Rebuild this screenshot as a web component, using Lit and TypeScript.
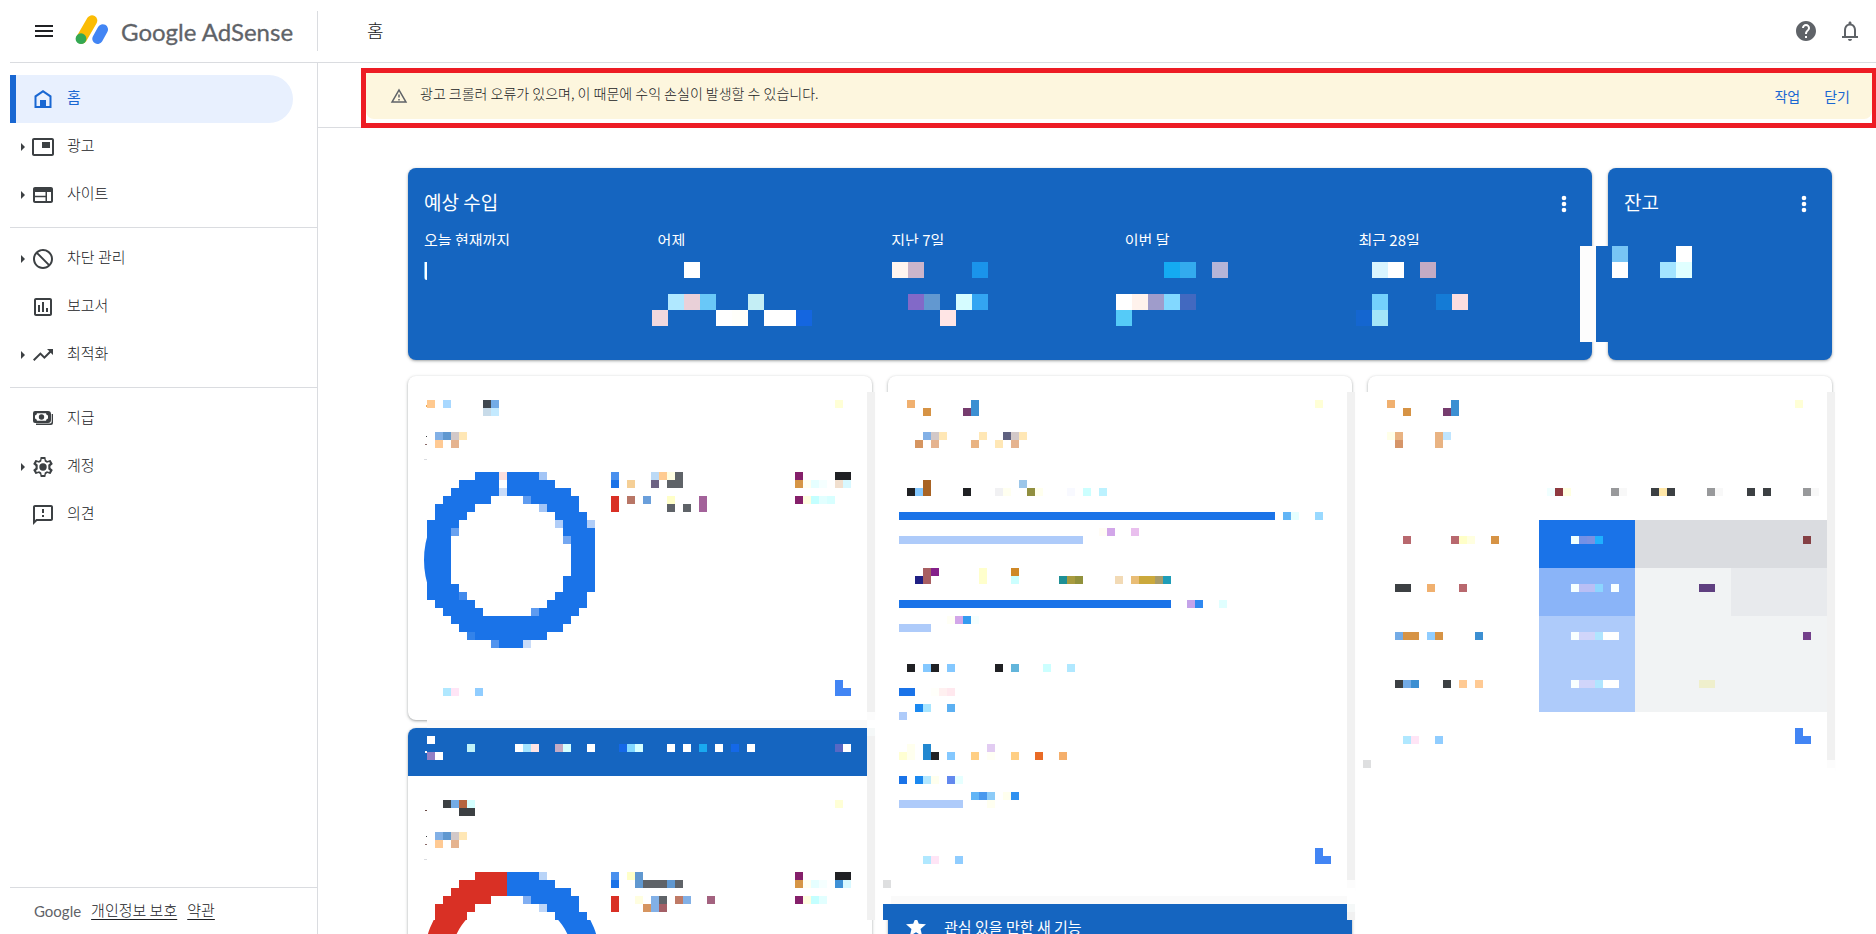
import { LitElement, html, svg, css } from "lit";
import { customElement, property } from "lit/decorators.js";

const PALETTE: Record<string, string> = {
  B: "#1a73e8",
  R: "#d93025",
  L: "#aecbfa",
  N: "#1565c0",
  W: "#ffffff",
  K: "#202124",
  G: "#3c4043",
  S: "#5f6368",
  E: "#f1f1f1",
};

// Each line reads "row[*rows] col[+cols]:color ...", measured in mosaic cells.
const SUMMARY = `
0*6 72:fdfdfd
0 74:78c5f5 78:W
1 16:W 29:fff5f0 30:cbb5cb 34:1a94eb 46:14abf2 47:33abee 49:b5b5d8 59:d8f5ff 60:W 62:c4abc4 74:W 77:a3e4ff 78:e0ffff
3 15:b0e8ff 16:e9d0d8 17:69c8f8 20:c4eef5 30:8269c8 31:6298d0 33:d5fcff 34:33a5f2 43:W 44:fff2ec 45:9f9ccb 46:82d8ff 47:4269c0 59:73d0fc 63:147bd6 64:fadde0
4 14:f0d8de 18:W 19:fffffa 21+2:W 23:1466e0 32:ffe5e5 43:55cbf8 58:1466d0 59:a3e5f8`;

const OVERVIEW = `
0*40 55:E
1 0:ffc98f 2:a8d8ff 7:3f474f 8:73abe6 51:ffffd6
1.625*0.25 -0.125+0.125:f0a850
2 7:c8dbe9 8:c4eaff
5 1:82b0e6 2:6098d0 3:d2c8c8 4:ffe7b5
5.5*0.125 -0.125+0.125:G
6 1:ffca94 3:e5b38f
6.5*0.125 -0.25+0.25:8a6a68
8.375*0.125 -0.375+0.375:dadce0
10 6+3:B 9:fbdfdd 10+4:B 14:a3c5f6 23:4990ee 28:bcdaf6 29:ffcb90 30:fffee2 31:S 46:85206a 51+2:K
11 4+5:B 10+6:B 23:B 25:f5cf96 28:6d6384 30+2:S 46:d69545 47:fffef2 48:e6ffff 49:f5ffff 51:f1dfce 52:d8f8ff
12 3+6:B 9:c9dcf9 10+8:B
13 2+6:B 12:5e9bf0 13+6:B 23:R 25:b87666 27:6a9fdb 30:ffffc8 34:a3629a 46:85206a 47:fffee0 48:c4ffff 49:e2ffff 50:d8ffff
14 1+5:B 14:a3c5f6 15+4:B 23:R 30:S 32:S 34:a3629a
15 1+4:B 16+4:B
16 0+4:B 16:b0cdf8 17+3:B 20:b0cdf8
17 0+3:B 3:69a1ef 17+4:B
18 0+3:B 17:74a7f1 18+3:B
19*4 0+3:B 18+3:B
23 0+3:B 17+4:B
24 0+4:B 17+4:B
25 0+4:B 4:428aec 16+4:B
26 1+5:B 15+5:B
27 2+5:B 13:5e9bf0 14+5:B
28 3+15:B
29 4+13:B
30 5:3383ea 6+9:B
31 8:5294ee 9+3:B 12:c9dcf9
36 51:4285f4
37 2:b0e8ff 3:ffe5f6 6:90cdff 51+2:4285f4
40 55:fcfcfc
41 0+55:fafafa
42*6 0+55:N
42 55:f5f8f8
43*23 55:E
43 0:W
44 5:c0f2f8 11:W 12:a3e4ff 13:ffe4e4 16:c4abc4 17:d5ffff 20:W 24:1468e8 25:82d8ff 26:d5ffff 30:W 32:W 34:19a9f0 36:W 38:1468e8 40:W 51:5768c4 52:W
44.875*0.25 -0.25+0.25:W
45 0:917fc4 1:W
51 2:G 3:73abe6 4:b5653f 5:d5ffff 51:ffffd6
52 4+2:G
52.25*0.125 -0.25+0.25:6b4a44
55 1:82b0e6 2:6098d0 3:d2c8c8 4:ffe7b5
55.5*0.125 -0.125+0.125:G
56 1:ffca94 3:e5b38f
56.5*0.125 -0.25+0.25:8a6a68
58.375*0.125 -0.375+0.375:dadce0
60 6+4:R 10+4:B 14:b9d4f8 23:4990ee 25:ffffc8 26:6098d0 46:85206a 51+2:K
61 4+6:R 10+6:B 23:B 26:6098d0 27+3:S 30:6098d0 31:S 46:d69545 47:fffef2 48:e6ffff 49:f5ffff 51:3f91d6 52:d8f8ff
62 3+7:R 10+8:B
63 2+6:R 12:80aef2 13+6:B 23:R 26:fffee0 28:82b0e6 29:S 31:bf7a66 32:82b0e6 35:a3627f 46:85206a 47:fffee0 48:c4ffff 49:e2ffff
64 1+5:R 14:bed6f8 15+4:B 23:R 27:d69560 28:82b0e6 29:a35f66
65 1+4:R 16+4:B`;

const PAGES = `
0*61 58:E
1 3:f0b06f 11:3c8fd2 54:ffffd6
2 5:d69345 10:763c6e 11:3c8fd2
5 5:82b0e6 6:d2c8c8 7:ffe7b5 12:ffe7b5 15:5f6180 16:d2c8c8 17:ffe7b5
6 4:d69560 6:e5b38f 11:e9b382 14:ffe7b5 16:e5b38f
11 5:a86324 17:9cc6e9
12 3:K 4:84c8ff 5:a86324 10:K 14:f1f1f3 15:fffff0 18:918f3f 19:ffffee 23:f8f9ff 25:ccffff 27:bcf2ff
15 2+47:B 50:62b5f6 51:e6ffff 54:99d9ff
17 27:fffcf5 28:d2a6e9 31:e9bfee
18 2+23:L
22 5:a85f62 6:85208a 12:ffffcc 16:cf8826
23 4:202084 5:a85f62 12:ffffcc 16:ccffff 22:1f9096 23:a89b3f 24:91913c 29:f2dab5 31:e9bd76 32+2:cba93c 34:a89b69 35:1f9db8
26 2+34:B 38:c4a3e9 39:2f88f0 42:e0ffff
28 8:fffff5 9:d2a6e9 10:339bf0 11:f5ffff
29 2+4:L
34 3:K 5:84c8ff 6:K 8:84c8ff 14:K 16:62b5db 20:ccffff 23:b0e8ff
37 2+2:B 6:fffffa 7:fff0f0 8:ffe8ee
39 4:1a88f0 5:a8e5ff 8:5cb0f2
40 2:L
44 3:ffffee 5:2288d0 13:e2ccf2
45 2:ffffd2 3:ffffee 5:2288d0 6:K 8:84c8ff 11:ffcf84 13:fffff5 16:ffcf84 19:e96b26 22:f5af6b
48 2:B 4:1a88f0 5:b5e8ff 6:ffffee 8:6288ee 9:e6ffff
50 11:62b5f6 12:4998ee 13:8ccbf8 15:ffffee 16:2f91f0
51 2+8:L 13:fffff0
57 54:4285f4
58 5:b0e8ff 6:ffe5f6 9:90cdff 54+2:4285f4
61 0:dedfe0 58:fcfcfc
63 1+57:fafafa
64*2 0+58:N
64 58:f5f8f8
65 58:E`;

const SIZES = `
0*46 58:E
1 3:f0b06f 11:3c8fd2 54:ffffd6
2 5:d69345 10:763c6e 11:3c8fd2
5 3:ffffe8 4:e9b382 9:e9b382 10:bfe5ff
6 4:d69569 9:e9b382
12 23:f0ffff 24:8f3a40 25:ffffe0 31:98999b 32:f8f8f8 36:G 37:ffe7a8 38:G 43:98999b 44:f8f8f8 48:G 50:G 55:98999b 56:f8f8f8
16*6 22+12:B 34+24:dadce0
18 5:b8686e 11:b8686e 12:ffffc8 13:ffffe0 16:d69345 26:f0ffff 27:7391e6 28:7a91e2 29:1fb0ff 55:854045
22*6 22+12:8ab4f8 34+12:f1f3f4 46+12:e8eaed
24 4+2:G 8:f0b06f 12:b8686e 26:f5ffff 27+2:b9bff5 29:8cd5ff 31:f8ffff 42+2:5f3f80
28*12 22+12:L 34+24:f1f3f4
30 4:73abe6 5+2:d69345 8:90cdff 9:d69345 14:3c8fd2 26:f8ffff 27+2:d0d5fa 29:b0e5ff 30+2:W 55:733f8a
36 4:G 5:73abe6 6:3c8fd2 10:G 12:ffca94 14:ffca94 26:f8ffff 27+2:d0d5fa 29:b0e5ff 30+2:W 42+2:efefcc
42 54:4285f4
43 5:b0e8ff 6:ffe5f6 9:90cdff 54+2:4285f4
46 0:dedfe0 58:fcfcfc`;

interface Block { x: number; y: number; w: number; h: number; fill: string }

function parseBlocks(source: string): Block[] {
  const blocks: Block[] = [];
  for (const line of source.trim().split("\n")) {
    const [rowPart, ...cells] = line.trim().split(" ");
    const [y, h = 1] = rowPart.split("*").map(Number);
    for (const cell of cells) {
      const [span, color] = cell.split(":");
      const [x, w = 1] = span.split("+").map(Number);
      blocks.push({ x, y, w, h, fill: PALETTE[color] ?? `#${color}` });
    }
  }
  return blocks;
}

@customElement("pixel-mosaic")
class PixelMosaic extends LitElement {
  static styles = css`
    :host { display: block; pointer-events: none; }
    svg { display: block; overflow: visible; }
  `;
  @property() source = "";
  @property() ground = "#ffffff";
  @property({ type: Number }) cell = 8;
  @property({ type: Number }) cols = 1;
  @property({ type: Number }) rows = 1;

  render() {
    return html`<svg width=${this.cols * this.cell} height=${this.rows * this.cell}
      viewBox="0 0 ${this.cols} ${this.rows}" shape-rendering="crispEdges" aria-hidden="true">
      <rect width=${this.cols} height=${this.rows} fill=${this.ground}></rect>
      ${parseBlocks(this.source).map(b => svg`<rect x=${b.x} y=${b.y} width=${b.w} height=${b.h} fill=${b.fill}></rect>`)}
    </svg>`;
  }
}

const ICONS: Record<string, unknown> = {
  menu: svg`<path d="M3 18h18v-2H3v2zm0-5h18v-2H3v2zm0-7v2h18V6H3z"/>`,
  help: svg`<path d="M12 2C6.48 2 2 6.48 2 12s4.48 10 10 10 10-4.48 10-10S17.52 2 12 2zm1 17h-2v-2h2v2zm2.07-7.75l-.9.92C13.45 12.9 13 13.5 13 15h-2v-.5c0-1.1.45-2.1 1.17-2.83l1.24-1.26c.37-.36.59-.86.59-1.41 0-1.1-.9-2-2-2s-2 .9-2 2H8c0-2.21 1.79-4 4-4s4 1.79 4 4c0 .88-.36 1.68-.93 2.25z"/>`,
  bell: svg`<path d="M10 20h4c0 1.100-.9 2-2 2s-2-.9-2-2zM18 17v-6c0-3.070-1.640-5.640-4.500-6.320V4c0-.83-.67-1.500-1.500-1.500s-1.500.67-1.500 1.500v.68C7.630 5.360 6 7.920 6 11v6H4v2h16v-2h-2zm-2 0H8v-6c0-2.480 1.510-4.500 4-4.500s4 2.020 4 4.500v6z"/>`,
  warning: svg`<path d="M12 5.990L19.530 19H4.470L12 5.990M12 2L1 21h22L12 2zm1 14h-2v2h2v-2zm0-6h-2v4h2v-4z"/>`,
  more: svg`<circle cx="12" cy="6" r="2.300"/><circle cx="12" cy="12" r="2.300"/><circle cx="12" cy="18" r="2.300"/>`,
  home: svg`<path d="M12 3 3.500 8.800V21h17V8.800L12 3zm6.500 16h-3.500v-6H9v6H5.500V9.900L12 5.400l6.500 4.500V19z"/><path d="M9 13h6v7H9z"/>`,
  ads: svg`<path d="M21 3H3c-1.100 0-2 .9-2 2v14c0 1.100.9 2 2 2h18c1.100 0 2-.9 2-2V5c0-1.100-.9-2-2-2zm0 16H3V5h18v14z"/><path d="M11 7h8v6h-8z"/>`,
  sites: svg`<path d="M20 4H4c-1.100 0-1.990.9-1.990 2L2 18c0 1.100.9 2 2 2h16c1.100 0 2-.9 2-2V6c0-1.100-.9-2-2-2zm-5.500 14H4v-3.700h10.500V18zm0-5.200H4V9h10.500v3.800zM20 18h-4V9h4v9z"/>`,
  block: svg`<path d="M12 2C6.480 2 2 6.480 2 12s4.480 10 10 10 10-4.480 10-10S17.520 2 12 2zM4 12c0-4.420 3.580-8 8-8 1.850 0 3.550.63 4.900 1.690L5.690 16.900C4.630 15.550 4 13.850 4 12zm8 8c-1.850 0-3.550-.63-4.900-1.690L18.310 7.100C19.370 8.450 20 10.150 20 12c0 4.420-3.580 8-8 8z" transform="matrix(-1 0 0 1 24 0)"/>`,
  reports: svg`<path d="M19 3H5c-1.100 0-2 .9-2 2v14c0 1.100.9 2 2 2h14c1.100 0 2-.9 2-2V5c0-1.100-.9-2-2-2zm0 16H5V5h14v14zM7 10h2v7H7zm4-3h2v10h-2zm4 6h2v4h-2z"/>`,
  trend: svg`<path d="M16 6l2.290 2.290-4.880 4.880-4-4L2 16.590 3.410 18l6-6 4 4 6.300-6.290L22 12V6z"/>`,
  pay: svg`<path fill-rule="evenodd" d="M4 4h13a3 3 0 0 1 3 3v6a3 3 0 0 1-3 3H4a2 2 0 0 1-2-2V6a2 2 0 0 1 2-2zm2 2.200A2.500 2.500 0 0 1 4 8.500v3a2.500 2.500 0 0 1 2 2.300h9a2.500 2.500 0 0 1 2-2.300v-3a2.500 2.500 0 0 1-2-2.300H6z"/><circle cx="10.500" cy="10" r="2.700"/><path d="M20.700 7H22v9a2 2 0 0 1-2 2H5v-1.500h14a1.700 1.700 0 0 0 1.700-1.700V7z"/>`,
  gear: svg`<path d="M19.430 12.980c.04-.32.07-.64.07-.98s-.03-.66-.07-.98l2.110-1.650c.19-.15.24-.42.12-.64l-2-3.460c-.12-.22-.39-.3-.61-.22l-2.490 1c-.52-.4-1.080-.73-1.690-.98l-.38-2.650C14.460 2.180 14.250 2 14 2h-4c-.25 0-.46.18-.49.42l-.38 2.650c-.61.25-1.170.59-1.690.98l-2.490-1c-.23-.09-.49 0-.61.22l-2 3.460c-.13.22-.07.49.12.64l2.110 1.650c-.04.32-.07.65-.07.98s.03.66.07.98l-2.110 1.650c-.19.15-.24.42-.12.64l2 3.460c.12.22.39.3.61.22l2.490-1c.52.4 1.080.73 1.690.98l.38 2.650c.03.24.24.42.49.42h4c.25 0 .46-.18.49-.42l.38-2.650c.61-.25 1.170-.59 1.690-.98l2.490 1c.23.09.49 0 .61-.22l2-3.460c.12-.22.07-.49-.12-.64l-2.110-1.650zM17.300 14.200l1.700 1.500-.8 1.400-2.300-.8-2.100 1.300-.5 2.400h-2.600l-.5-2.400-2.100-1.300-2.300.8-.8-1.400 1.700-1.500v-4.400L5 8.300l.8-1.400 2.300.8 2.100-1.300.5-2.400h2.600l.5 2.400 2.100 1.300 2.300-.8.8 1.400-1.700 1.500v4.400z"/><circle cx="12" cy="12" r="3.700"/>`,
  feedback: svg`<path d="M20 2H4c-1.100 0-1.990.9-1.990 2L2 22l4-4h14c1.100 0 2-.9 2-2V4c0-1.100-.9-2-2-2zm0 14H5.170L4 17.170V4h16v12zm-9-4h2v2h-2zm0-6h2v4h-2z"/>`,
  star: svg`<path d="M12 17.270L18.180 21l-1.640-7.030L22 9.240l-7.190-.61L12 2 9.190 8.630 2 9.240l5.460 4.730L5.820 21z"/>`,
};

@customElement("ui-icon")
class UiIcon extends LitElement {
  static styles = css`
    :host { display: block; flex: none; width: 24px; height: 24px; }
    svg { display: block; width: 100%; height: 100%; fill: currentColor; }
  `;
  @property() name = "";
  render() {
    return html`<svg viewBox="0 0 24 24" aria-hidden="true">${ICONS[this.name]}</svg>`;
  }
}

const NAV = [
  [
    { icon: "home", label: "홈", active: true },
    { icon: "ads", label: "광고", expand: true },
    { icon: "sites", label: "사이트", expand: true },
  ],
  [
    { icon: "block", label: "차단 관리", expand: true },
    { icon: "reports", label: "보고서" },
    { icon: "trend", label: "최적화", expand: true },
  ],
  [
    { icon: "pay", label: "지급" },
    { icon: "gear", label: "계정", expand: true },
    { icon: "feedback", label: "의견" },
  ],
] as { icon: string; label: string; active?: boolean; expand?: boolean }[][];

const PERIODS = ["오늘 현재까지", "어제", "지난 7일", "이번 달", "최근 28일"];

@customElement("app-root")
class AppRoot extends LitElement {
  static styles = css`
    :host {
      display: flex;
      flex-direction: column;
      box-sizing: border-box;
      height: 100vh;
      padding-left: 10px;
      overflow: hidden;
      background: #fff;
      color: #202124;
      font: 300 15px/24px "Noto Sans CJK KR", "Noto Sans", sans-serif;
    }
    * { box-sizing: border-box; }
    button {
      padding: 0;
      border: 0;
      background: none;
      color: inherit;
      font: inherit;
      cursor: pointer;
    }
    h1, h2, p, ul { margin: 0; padding: 0; font: inherit; list-style: none; }

    .topbar {
      display: flex;
      flex: none;
      align-items: center;
      height: 63px;
      border-bottom: 1px solid #dadce0;
    }
    .brand {
      display: flex;
      align-items: center;
      width: 308px;
      height: 40px;
      padding-left: 22px;
      border-right: 1px solid #dadce0;
    }
    .logo { display: flex; align-items: center; margin-left: 19px; color: #5f6368; text-decoration: none; }
    .mark { display: block; margin-right: 12px; }
    .wordmark { padding-top: 2px; font: 400 24px/32px Lato, sans-serif; white-space: nowrap; -webkit-text-stroke: 0.3px currentColor; }
    .title { flex: 1; padding: 0 0 3px 49px; font-size: 18px; }
    .tools { display: flex; gap: 20px; padding-right: 14px; color: #5f6368; }

    .shell { display: flex; flex: 1; min-height: 0; }
    .side {
      display: flex;
      flex: none;
      flex-direction: column;
      width: 308px;
      border-right: 1px solid #dadce0;
    }
    .nav { flex: 1; padding-top: 12px; }
    .group { padding-bottom: 8px; }
    .group + .group { padding-top: 7px; border-top: 1px solid #dadce0; }
    .item {
      display: flex;
      align-items: center;
      height: 48px;
      margin-right: 24px;
      padding-left: 21px;
      border-radius: 0 24px 24px 0;
      color: inherit;
      text-decoration: none;
    }
    .item ui-icon { color: #3c4043; }
    .item.active {
      padding-left: 15px;
      border-left: 6px solid #1967d2;
      background: #e8f0fe;
      color: #1967d2;
      font-weight: 400;
    }
    .item.active ui-icon { color: inherit; }
    .expand::before {
      content: "";
      width: 0;
      margin: 0 6px 0 -10px;
      border: solid transparent;
      border-width: 4px 0 4px 4px;
      border-left-color: #3c4043;
    }
    .label { padding: 0 0 4px 12px; }
    .legal {
      display: flex;
      gap: 10px;
      height: 47px;
      padding: 10px 24px;
      border-top: 1px solid #dadce0;
    }
    .legal a { color: inherit; text-underline-offset: 3px; }
    .legal-name { font: 400 15px/26px Lato, sans-serif; color: #5f6368; }

    .main { flex: 1; min-width: 0; overflow: hidden; }
    .notice { height: 65px; padding: 5px 0 0 43px; border-bottom: 1px solid #dadce0; }
    .frame { height: 60px; padding-bottom: 4px; border: 5px solid #ed1c24; border-right-width: 4px; background: #fff; }
    .banner {
      display: flex;
      align-items: center;
      height: 46px;
      padding: 0 22px 0 24px;
      border-radius: 0 0 8px 8px;
      background: #fdf6de;
      font-size: 14px;
    }
    .banner ui-icon { width: 18px; height: 18px; color: #5f6368; }
    .message { flex: 1; padding: 0 0 6px 12px; }
    .actions { display: flex; gap: 24px; color: #1967d2; font-weight: 400; }

    .board { display: flex; flex-direction: column; gap: 16px; padding: 40px 44px 0 90px; }
    .summary { position: relative; display: grid; grid-template-columns: repeat(6, 1fr); gap: 16px; }
    .card {
      border-radius: 8px;
      background: #fff;
      box-shadow: 0 1px 2px rgba(60, 64, 67, 0.3), 0 1px 3px 1px rgba(60, 64, 67, 0.15);
    }
    .blue { min-height: 192px; padding: 24px 0 0 16px; background: #1565c0; color: #fff; font-weight: 400; }
    .blue.wide { grid-column: span 5; }
    .card-head { display: flex; justify-content: space-between; padding-right: 16px; font-size: 19px; }
    .card-head h2 { line-height: 20px; }
    .periods { display: flex; padding-top: 16px; line-height: 16px; }
    .periods li { flex: 1; }
    .cursor { width: 3px; height: 18px; margin-top: 14px; background: linear-gradient(90deg, #6fbdf5 1px, #fff 1px); border-radius: 0 0 0 3px; }
    .columns { display: grid; grid-template-columns: repeat(3, 1fr); gap: 16px; }
    .column { position: relative; display: flex; flex-direction: column; gap: 8px; }
    .chart { height: 344px; padding: 96px 16px 0; }
    .chart svg { display: block; }
    .strip {
      display: flex;
      align-items: center;
      gap: 16px;
      height: 48px;
      padding: 0 16px 2px;
      border-radius: 8px 8px 0 0;
      background: #1565c0;
      color: #fff;
      font-weight: 400;
    }
    .pages { height: 520px; }
    .sizes { height: 400px; }
    .more-body { height: 300px; }
    .cover { position: absolute; top: 16px; left: -5px; }
    .cover.inset { left: 19px; }
    .cover.top { top: 78px; left: 20px; }
  `;

  private donut(left: string) {
    return html`<svg width="176" height="176" viewBox="0 0 176 176" fill="none" stroke-width="27" aria-hidden="true">
      <path d="M88 13.500a74.500 74.500 0 0 1 0 149" stroke="#1a73e8"></path>
      <path d="M88 162.500a74.500 74.500 0 0 1 0-149" stroke=${left}></path>
    </svg>`;
  }

  render() {
    return html`
      <header class="topbar">
        <div class="brand">
          <button aria-label="메뉴"><ui-icon name="menu"></ui-icon></button>
          <a class="logo" href="#" aria-label="Google AdSense">
            <svg class="mark" width="34" height="32" viewBox="0 0 34 32" fill="none" stroke-linecap="round" aria-hidden="true">
              <path d="M17 5.500 6.600 23.500" stroke="#fbbc04" stroke-width="10.600"></path>
              <circle cx="6" cy="23.700" r="5.400" fill="#34a853"></circle>
              <path d="M27.700 14.500 22.600 23.700" stroke="#4285f4" stroke-width="10.600"></path>
            </svg>
            <span class="wordmark">Google AdSense</span>
          </a>
        </div>
        <h1 class="title">홈</h1>
        <div class="tools">
          <button aria-label="도움말"><ui-icon name="help"></ui-icon></button>
          <button aria-label="알림"><ui-icon name="bell"></ui-icon></button>
        </div>
      </header>
      <div class="shell">
        <aside class="side">
          <nav class="nav">
            ${NAV.map(group => html`<div class="group">${group.map(item => html`
              <a href="#" class="item ${item.active ? "active" : ""} ${item.expand ? "expand" : ""}">
                <ui-icon name=${item.icon}></ui-icon><span class="label">${item.label}</span>
              </a>`)}</div>`)}
          </nav>
          <footer class="legal">
            <span class="legal-name">Google</span>
            <a href="#">개인정보 보호</a>
            <a href="#">약관</a>
          </footer>
        </aside>
        <main class="main">
          <div class="notice">
            <div class="frame">
              <div class="banner" role="alert">
                <ui-icon name="warning"></ui-icon>
                <p class="message">광고 크롤러 오류가 있으며, 이 때문에 수익 손실이 발생할 수 있습니다.</p>
                <div class="actions"><button>작업</button><button>닫기</button></div>
              </div>
            </div>
          </div>
          <div class="board">
            <div class="summary">
              <section class="card blue wide">
                <div class="card-head"><h2>예상 수입</h2><button aria-label="더보기"><ui-icon name="more"></ui-icon></button></div>
                <ul class="periods">${PERIODS.map((p, i) => html`<li>${p}${i ? "" : html`<div class="cursor"></div>`}</li>`)}</ul>
              </section>
              <section class="card blue">
                <div class="card-head"><h2>잔고</h2><button aria-label="더보기"><ui-icon name="more"></ui-icon></button></div>
              </section>
              <pixel-mosaic class="cover top" .source=${SUMMARY} ground="#1565c0" cell="16" cols="74" rows="6"></pixel-mosaic>
            </div>
            <div class="columns">
              <div class="column">
                <section class="card chart">${this.donut("#1a73e8")}</section>
                <section class="card">
                  <div class="strip"></div>
                  <div class="chart">${this.donut("#d93025")}</div>
                </section>
                <pixel-mosaic class="cover inset" .source=${OVERVIEW} cols="56" rows="66"></pixel-mosaic>
              </div>
              <div class="column">
                <section class="card pages"></section>
                <section class="card">
                  <div class="strip"><ui-icon name="star"></ui-icon><h2>관심 있을 만한 새 기능</h2></div>
                  <div class="more-body"></div>
                </section>
                <pixel-mosaic class="cover" .source=${PAGES} cols="59" rows="66"></pixel-mosaic>
              </div>
              <div class="column">
                <section class="card sizes"></section>
                <pixel-mosaic class="cover" .source=${SIZES} cols="59" rows="50"></pixel-mosaic>
              </div>
            </div>
          </div>
        </main>
      </div>`;
  }
}
